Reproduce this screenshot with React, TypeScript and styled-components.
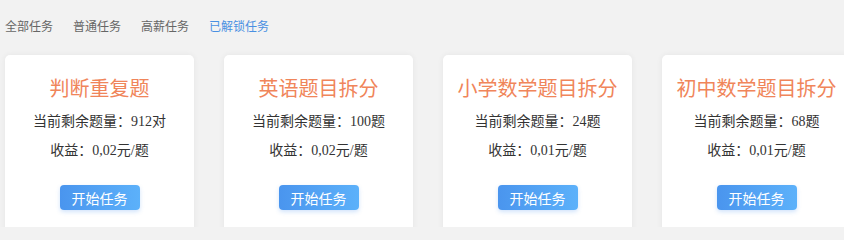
import styled, { createGlobalStyle } from "styled-components";
import { useState } from "react";

const GlobalStyle = createGlobalStyle`
  body {
    margin: 0;
    background: #f2f2f2;
    font-family: "Noto Sans CJK SC", sans-serif;
  }
`;

const Page = styled.div`
  width: 844px;
  height: 227px;
  overflow: hidden;
`;

const Tabs = styled.div`
  display: flex;
  gap: 20px;
  padding: 16px 0 0 5px;
  height: 39px;
  box-sizing: border-box;
`;

const Tab = styled.div<{ $active?: boolean }>`
  font-size: 12px;
  line-height: 20px;
  color: ${(p) => (p.$active ? "#4a90e2" : "#666")};
  cursor: pointer;
`;

const CardRow = styled.div`
  display: flex;
  gap: 30px;
  padding: 16px 0 0 5px;
`;

const Card = styled.div`
  flex: 0 0 189px;
  height: 200px;
  background: #fff;
  border-radius: 5px;
  box-shadow: 0 0 6px rgba(0, 0, 0, 0.06);
  display: flex;
  flex-direction: column;
  align-items: center;
  padding-top: 19px;
  box-sizing: border-box;
`;

const Title = styled.h3`
  margin: 0;
  font-size: 20px;
  line-height: 28px;
  font-weight: normal;
  color: #f0855a;
`;

const Info = styled.p<{ $first?: boolean }>`
  margin: ${(p) => (p.$first ? "5px" : "0")} 0 0;
  font-size: 14px;
  line-height: 29px;
  color: #333;
  font-family: "Liberation Serif", "Noto Sans CJK SC", serif;
`;

const StartButton = styled.button`
  margin-top: 20px;
  width: 80px;
  height: 25px;
  border: none;
  border-radius: 4px;
  background: linear-gradient(90deg, #4a95ee, #5cb1fa);
  box-shadow: 0 2px 4px rgba(74, 149, 238, 0.25);
  color: #fff;
  font-size: 14px;
  font-family: "Noto Sans CJK SC", sans-serif;
  padding: 0;
  cursor: pointer;
`;

type Task = {
  title: string;
  remain: string;
  income: string;
};

const tasks: Task[] = [
  { title: "判断重复题", remain: "912对", income: "0,02元/题" },
  { title: "英语题目拆分", remain: "100题", income: "0,02元/题" },
  { title: "小学数学题目拆分", remain: "24题", income: "0,01元/题" },
  { title: "初中数学题目拆分", remain: "68题", income: "0,01元/题" },
];

const tabs = ["全部任务", "普通任务", "高薪任务", "已解锁任务"];

const App = () => {
  const [active, setActive] = useState(3);

  return (
    <Page>
      <GlobalStyle />
      <Tabs>
        {tabs.map((t, i) => (
          <Tab key={t} $active={i === active} onClick={() => setActive(i)}>
            {t}
          </Tab>
        ))}
      </Tabs>
      <CardRow>
        {tasks.map((task) => (
          <Card key={task.title}>
            <Title>{task.title}</Title>
            <Info $first>当前剩余题量：{task.remain}</Info>
            <Info>收益：{task.income}</Info>
            <StartButton>开始任务</StartButton>
          </Card>
        ))}
      </CardRow>
    </Page>
  );
};

export default App;
